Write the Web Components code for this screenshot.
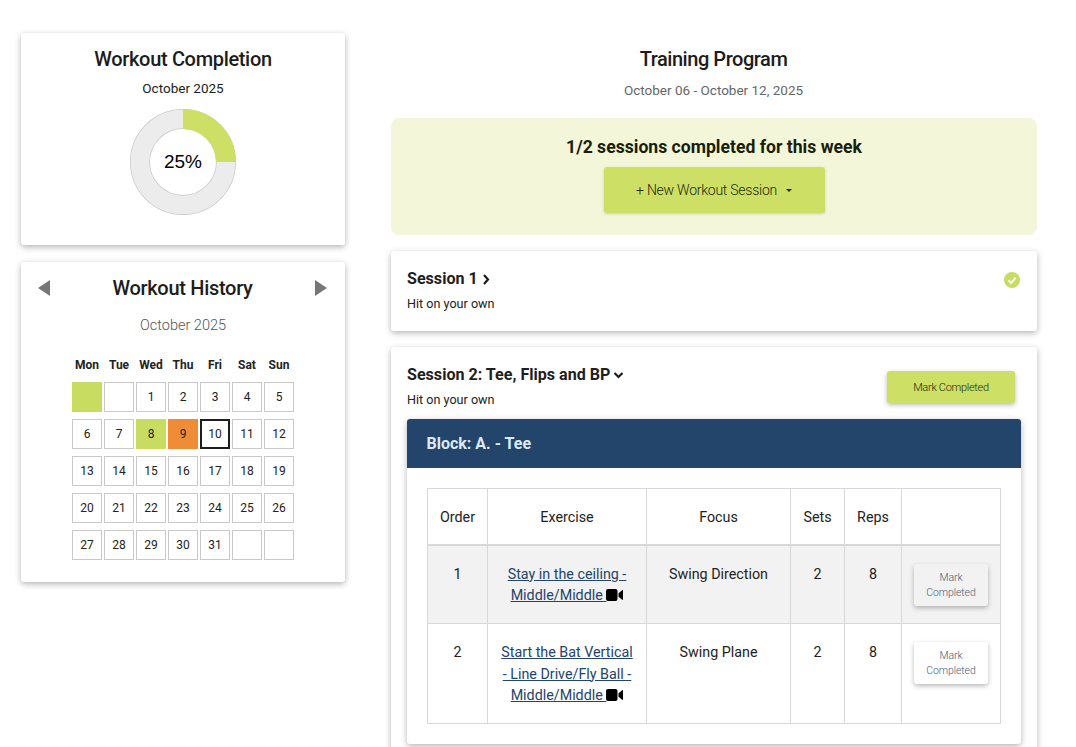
<!DOCTYPE html>
<html>
<head>
<meta charset="utf-8">
<title>Training Program</title>
<style>
  html, body { margin: 0; height: 747px; overflow: hidden; background: #fff; }
  body { font-family: Roboto, "Liberation Sans", sans-serif; color: #212529; }
</style>
</head>
<body>
<training-page></training-page>

<script>
// white box with the shadow used all over the page
class PanelCard extends HTMLElement {
  connectedCallback() {
    this.attachShadow({mode: 'open'}).innerHTML = `
      <style>
        :host {
          display: block;
          box-sizing: border-box;
          background: #fff;
          border-radius: 3px;
          box-shadow: 0 2px 6px rgba(0,0,0,.3);
        }
      </style>
      <slot></slot>`
  }
}

class ActionButton extends HTMLElement {
  connectedCallback() {
    this.attachShadow({mode: 'open'}).innerHTML = `
      <style>
        :host {
          display: flex;
          align-items: center;
          justify-content: center;
          box-sizing: border-box;
          text-align: center;
          font-family: Roboto, sans-serif;
          font-weight: 300;
          border-radius: 3px;
          box-shadow: 0 2px 5px rgba(0,0,0,.28);
        }
        :host([kind=green]) { background: #cddf65; color: #23280c; }
        :host([kind=plain]) { background: transparent; color: #4a5a75; width: 74px; height: 42px; font-size: 10.5px; line-height: 15px; letter-spacing: -.1px; }
        :host([soft]) { box-shadow: 0 1px 3px rgba(0,0,0,.16); }
      </style>
      <slot></slot>`
  }
}

class CompletionDonut extends HTMLElement {
  connectedCallback() {
    this.attachShadow({mode: 'open'}).innerHTML = `
      <style>
        :host { display: grid; width: 106px; height: 106px; place-items: center; font-size: 19px; color: #000; font-family: "Liberation Sans", sans-serif; }
        svg, span { grid-area: 1 / 1; }
      </style>
      <svg width="106" height="106" viewBox="0 0 106 106">
        <circle cx="53" cy="53" r="43" fill="none" stroke="#c8c8c8" stroke-width="20"/>
        <circle cx="53" cy="53" r="43" fill="none" stroke="#ececec" stroke-width="18.6"/>
        <path d="M53 0A53 53 0 0 1 106 53H86A33 33 0 0 0 53 20Z" fill="#cddf65"/>
      </svg>
      <span>25%</span>`
  }
}

class MonthCalendar extends HTMLElement {
  connectedCallback() {
    const days = ['Mon','Tue','Wed','Thu','Fri','Sat','Sun']
      .map(d => `<b>${d}</b>`).join('')
    const cells = [['', 'done'], ['']]
    for (let d = 1; d <= 31; d++) {
      cells.push([d, d == 8 ? 'done' : d == 9 ? 'missed' : d == 10 ? 'today' : ''])
    }
    cells.push([''], [''])
    const html = cells.map(c => `<div class="cell ${c[1] || ''}">${c[0]}</div>`).join('')

    this.attachShadow({mode: 'open'}).innerHTML = `
      <style>
        :host { display: block; padding-top: 12px; }
        .head { display: flex; align-items: center; justify-content: space-between; padding: 0 18px 0 17px; height: 28px; }
        h2 { margin: 0; font-size: 20px; font-weight: 500; color: #1c1c1c; letter-spacing: -.3px; }
        .month { margin: 14px 0 0; height: 20px; line-height: 20px; text-align: center; font-size: 14.5px; font-weight: 300; color: #555; }
        .grid { display: grid; grid-template-columns: repeat(7, 30px); column-gap: 2px; justify-content: center; margin-top: 22px; padding-bottom: 22px; }
        b { font-size: 12px; line-height: 14px; height: 24px; text-align: center; color: #222; font-weight: 700; }
        .cell { box-sizing: border-box; height: 30px; margin-bottom: 7px; border: 1px solid #c9c9c9; display: flex; align-items: center; justify-content: center; font-size: 12px; color: #222; }
        .cell:nth-last-child(-n+7) { margin-bottom: 0; }
        .done { background: #c8dc62; border-color: #c8dc62; }
        .missed { background: #ee8c37; border-color: #ee8c37; }
        .today { border: 2px solid #1d1d1d; }
      </style>
      <div class="head">
        <svg width="12" height="16" viewBox="0 0 12 16"><path d="M12 0V16L0 8Z" fill="#777"/></svg>
        <h2>Workout History</h2>
        <svg width="12" height="16" viewBox="0 0 12 16"><path d="M0 0V16L12 8Z" fill="#777"/></svg>
      </div>
      <p class="month">October 2025</p>
      <div class="grid">${days}${html}</div>`
  }
}

class SessionCard extends HTMLElement {
  connectedCallback() {
    const open = this.hasAttribute('open')
    const chevron = open
      ? '<path d="M1.5 3L5.5 7L9.5 3" fill="none" stroke="#1c1c1c" stroke-width="2.2"/>'
      : '<path d="M3 1L7 5.5L3 10" fill="none" stroke="#1c1c1c" stroke-width="2.2"/>'
    this.attachShadow({mode: 'open'}).innerHTML = `
      <style>
        :host { display: block; padding: 16px 16px 17px; }
        .row { display: flex; justify-content: space-between; align-items: flex-start; }
        h3 { margin: 0; font-size: 16.1px; line-height: 24px; font-weight: 700; color: #1e1e1e; display: flex; align-items: center; gap: 3px; }
        p { margin: 3px 0 0; font-size: 12.6px; line-height: 20px; color: #222; }
      </style>
      <div class="row">
        <div>
          <h3>${this.getAttribute('title')}<svg width="11" height="11" viewBox="0 0 11 11">${chevron}</svg></h3>
          <p>Hit on your own</p>
        </div>
        <div><slot name="side"></slot></div>
      </div>
      <slot></slot>`
  }
}

class BlockTable extends HTMLElement {
  connectedCallback() {
    const video = `<svg width="17" height="12" viewBox="0 0 17 12"><rect width="11.5" height="12" rx="2" fill="#000"/><path d="M12.5 4.2L16.2 1.2C16.5 1 17 1.2 17 1.6V10.4C17 10.8 16.5 11 16.2 10.8L12.5 7.8Z" fill="#000"/></svg>`
    const rows = [
      [1, 'Stay in the ceiling - Middle/Middle', 'Swing Direction', 2, 8, 79],
      [2, 'Start the Bat Vertical - Line Drive/Fly Ball - Middle/Middle', 'Swing Plane', 2, 8, 100],
    ].map(r => `
      <tr style="height:${r[5]}px">
        <td>${r[0]}</td>
        <td><a href="#">${r[1]}&nbsp;</a>${video}</td>
        <td>${r[2]}</td>
        <td>${r[3]}</td>
        <td>${r[4]}</td>
        <td class="act"><action-button kind="plain">Mark<br>Completed</action-button></td>
      </tr>`).join('')
    this.attachShadow({mode: 'open'}).innerHTML = `
      <style>
        :host { display: block; margin-top: 9px; border-radius: 3px; background: #fff; box-shadow: 0 2px 6px rgba(0,0,0,.3); }
        header { height: 49px; line-height: 49px; padding-left: 19.5px; background: #23446b; color: #dde9f6; font-size: 16px; font-weight: 700; border-radius: 3px 3px 0 0; }
        .body { padding: 20px; }
        table { width: 573px; table-layout: fixed; border-collapse: collapse; font-size: 14.3px; line-height: 21.5px; color: #222; text-align: center; }
        th, td { border: 1px solid #d8d8d8; vertical-align: top; }
        th { font-weight: 400; height: 20px; vertical-align: middle; border-bottom-width: 2px; padding: 18px 0 15px; }
        td { padding: 18px 12px 10px; }
        tbody tr:first-child { background: #f2f2f2; }
        a { color: #23446b; }
        svg { vertical-align: -1px; }
        .act { padding: 18px 0 0 12px; }
      </style>
      <header>Block: A. - Tee</header>
      <div class="body">
        <table>
          <colgroup><col width="60"><col width="159"><col width="144"><col width="54"><col width="57"><col width="99"></colgroup>
          <thead><tr><th>Order</th><th>Exercise</th><th>Focus</th><th>Sets</th><th>Reps</th><th></th></tr></thead>
          <tbody>${rows}</tbody>
        </table>
      </div>`
  }
}

class TrainingPage extends HTMLElement {
  connectedCallback() {
    this.attachShadow({mode: 'open'}).innerHTML = `
      <style>
        :host { display: flex; gap: 46px; padding: 33px 0 0 21px; align-items: flex-start; }
        .left { width: 324px; display: flex; flex-direction: column; gap: 17px; }
        .right { width: 646px; display: flex; flex-direction: column; gap: 16px; }
        .completion { height: 212px; padding-top: 13px; display: flex; flex-direction: column; align-items: center; text-align: center; }
        h1 { margin: 0; font-size: 20px; line-height: 26px; font-weight: 500; color: #1c1c1c; letter-spacing: -.33px; }
        .completion p { margin: 6px 0 11px; font-size: 13.5px; line-height: 20px; color: #222; }
        .top { text-align: center; padding-right: 1px; }
        .top h1 { padding-top: 13px; letter-spacing: -.45px; }
        .top p { margin: 8px 0 0; font-size: 13.5px; line-height: 20px; color: #666; }
        .banner { height: 117px; box-sizing: border-box; padding-top: 17px; margin-top: 2px; background: #f3f6d8; border-radius: 8px; display: flex; flex-direction: column; align-items: center; }
        .banner h2 { margin: 0 0 8px; font-size: 17.6px; line-height: 24px; font-weight: 700; color: #1a1d0a; }
        .new { width: 221px; height: 46px; font-size: 14px; letter-spacing: -.25px; gap: 6px; }
        .new i { border: 3.5px solid transparent; border-top-color: #23280c; border-bottom: 0; margin-left: 3px; }
        .done { width: 16px; height: 16px; margin: 5px 1px 0 0; display: block; }
        .mark { width: 128px; height: 32px; font-size: 11px; letter-spacing: -.3px; margin: 8px 6px 0 0; }
      </style>
      <div class="left">
        <panel-card class="completion">
          <h1>Workout Completion</h1>
          <p>October 2025</p>
          <completion-donut></completion-donut>
        </panel-card>
        <panel-card><month-calendar></month-calendar></panel-card>
      </div>
      <div class="right">
        <div class="top">
          <h1>Training Program</h1>
          <p>October 06 - October 12, 2025</p>
        </div>
        <div class="banner">
          <h2>1/2 sessions completed for this week</h2>
          <action-button kind="green" soft class="new">+ New Workout Session <i></i></action-button>
        </div>
        <panel-card>
          <session-card title="Session 1">
            <svg slot="side" class="done" viewBox="0 0 16 16"><circle cx="8" cy="8" r="8" fill="#c8dc62"/><path d="M4.4 8.3L7 10.9L11.7 5.8" fill="none" stroke="#fff" stroke-width="2"/></svg>
          </session-card>
        </panel-card>
        <panel-card>
          <session-card title="Session 2: Tee, Flips and BP" open>
            <action-button slot="side" kind="green" class="mark">Mark Completed</action-button>
            <block-table></block-table>
          </session-card>
        </panel-card>
      </div>`
  }
}

customElements.define('panel-card', PanelCard)
customElements.define('action-button', ActionButton)
customElements.define('completion-donut', CompletionDonut)
customElements.define('month-calendar', MonthCalendar)
customElements.define('session-card', SessionCard)
customElements.define('block-table', BlockTable)
customElements.define('training-page', TrainingPage)
</script>
</body>
</html>
